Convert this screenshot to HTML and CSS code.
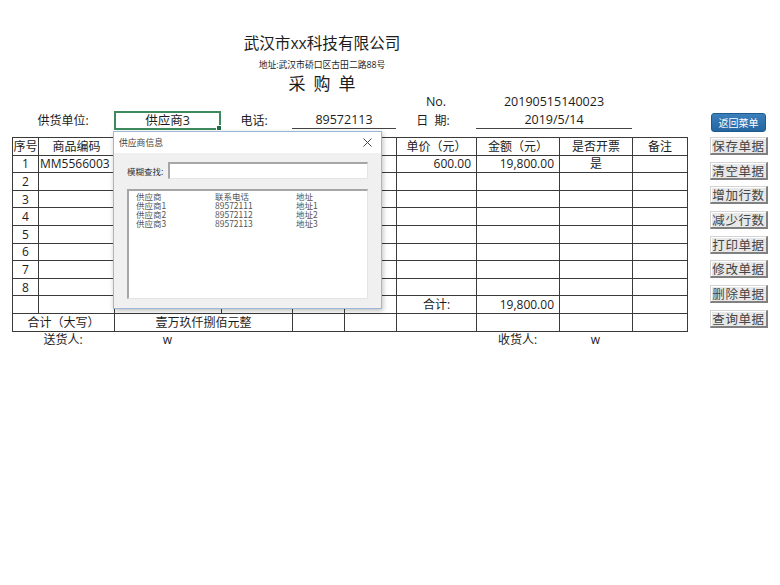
FILE: index.html
```html
<!DOCTYPE html>
<html lang="zh-CN">
<head>
<meta charset="utf-8">
<title>采购单</title>
<link rel="stylesheet" href="styles.css">
</head>
<body>
<div class="page">
  <main class="sheet">
    <header class="doc-head">
      <h1 class="company">武汉市xx科技有限公司</h1>
      <p class="address">地址:武汉市硚口区古田二路88号</p>
      <h2 class="doc-title">采购单</h2>
    </header>

    <div class="meta meta-top">
      <span class="cell at-5">No.</span>
      <span class="cell at-6">20190515140023</span>
    </div>
    <div class="meta meta-main">
      <span class="cell label">供货单位:</span>
      <span class="cell selected">供应商3</span>
      <span class="cell label phone-label">电话:</span>
      <span class="cell field-line">89572113</span>
      <span class="cell label date-label">日&nbsp;&nbsp;期:</span>
      <span class="cell field-line">2019/5/14</span>
    </div>

    <table class="grid">
      <colgroup>
        <col class="w-seq"><col class="w-code"><col class="w-name"><col class="w-spec">
        <col class="w-unit"><col class="w-qty"><col class="w-price"><col class="w-amount">
        <col class="w-invoice"><col class="w-note">
      </colgroup>
      <thead>
        <tr>
          <th class="tight">序号</th><th>商品编码</th><th></th><th></th>
          <th></th><th></th><th>单价（元）</th><th>金额（元）</th><th>是否开票</th><th>备注</th>
        </tr>
      </thead>
      <tbody>
        <tr><td class="c">1</td><td class="code">MM5566003</td><td></td><td></td><td></td><td></td><td class="r">600.00</td><td class="r">19,800.00</td><td class="c">是</td><td></td></tr>
        <tr><td class="c">2</td><td></td><td></td><td></td><td></td><td></td><td></td><td></td><td></td><td></td></tr>
        <tr><td class="c">3</td><td></td><td></td><td></td><td></td><td></td><td></td><td></td><td></td><td></td></tr>
        <tr><td class="c">4</td><td></td><td></td><td></td><td></td><td></td><td></td><td></td><td></td><td></td></tr>
        <tr><td class="c">5</td><td></td><td></td><td></td><td></td><td></td><td></td><td></td><td></td><td></td></tr>
        <tr><td class="c">6</td><td></td><td></td><td></td><td></td><td></td><td></td><td></td><td></td><td></td></tr>
        <tr><td class="c">7</td><td></td><td></td><td></td><td></td><td></td><td></td><td></td><td></td><td></td></tr>
        <tr><td class="c">8</td><td></td><td></td><td></td><td></td><td></td><td></td><td></td><td></td><td></td></tr>
        <tr><td></td><td></td><td></td><td></td><td></td><td></td><td class="c">合计:</td><td class="r">19,800.00</td><td></td><td></td></tr>
        <tr><td class="c" colspan="2">合计（大写）</td><td class="c" colspan="2">壹万玖仟捌佰元整</td><td></td><td></td><td></td><td></td><td></td><td></td></tr>
      </tbody>
    </table>

    <div class="sign">
      <span class="cell">送货人:</span>
      <span class="cell">w</span>
      <span class="cell at-6">收货人:</span>
      <span class="cell at-7">w</span>
    </div>
  </main>

  <aside class="actions">
    <button class="btn-primary">返回菜单</button>
    <button class="btn">保存单据</button>
    <button class="btn">清空单据</button>
    <button class="btn">增加行数</button>
    <button class="btn">减少行数</button>
    <button class="btn">打印单据</button>
    <button class="btn">修改单据</button>
    <button class="btn">删除单据</button>
    <button class="btn">查询单据</button>
  </aside>

  <section class="dialog">
    <div class="dialog-title">
      <span>供应商信息</span>
      <svg class="close" width="9" height="9" viewBox="0 0 9 9"><path d="M0.5 0.5 L8.5 8.5 M8.5 0.5 L0.5 8.5" stroke="#444" stroke-width="1" fill="none"/></svg>
    </div>
    <div class="dialog-body">
      <div class="search-row">
        <span class="search-label">模糊查找:</span>
        <span class="search-input"></span>
      </div>
      <div class="listbox">
        <div class="list-row"><span>供应商</span><span>联系电话</span><span>地址</span></div>
        <div class="list-row"><span>供应商1</span><span>89572111</span><span>地址1</span></div>
        <div class="list-row"><span>供应商2</span><span>89572112</span><span>地址2</span></div>
        <div class="list-row"><span>供应商3</span><span>89572113</span><span>地址3</span></div>
      </div>
    </div>
  </section>
</div>
</body>
</html>
```

FILE: styles.css
```css
* { box-sizing: border-box; }

body {
  margin: 0;
  background: #ffffff;
  color: #1c1c1c;
  font-family: "Open Sans", "Noto Sans CJK SC", sans-serif;
}

.page {
  position: relative;
  display: flex;
  width: 780px;
  height: 585px;
}

.sheet {
  width: 700px;
  padding-left: 12px;
}

/* ---------- heading ---------- */
.doc-head {
  width: 620px;
  text-align: center;
  padding-top: 33px;
}

.company {
  margin: 0;
  font-size: 15.6px;
  font-weight: 400;
  line-height: 20px;
}

.address {
  margin: 6px 0 0;
  font-size: 8.8px;
  line-height: 12px;
}

.doc-title {
  margin: 3px 0 0;
  font-size: 17px;
  font-weight: 400;
  line-height: 20px;
  letter-spacing: 8px;
  padding-left: 8px;
}

/* ---------- meta rows ---------- */
.meta {
  display: grid;
  grid-template-columns: 102px 107px 71px 104px 80px 156px;
  font-size: 12.5px;
}

.cell {
  text-align: center;
  white-space: nowrap;
}

.meta-top {
  height: 16px;
  line-height: 16px;
}

.at-5 { grid-column: 5; }
.at-6 { grid-column: 6; }
.at-7 { grid-column: 7; }

.meta-main {
  height: 19px;
  margin-top: 1px;
  line-height: 17px;
}

.label {
  font-size: 12px;
  line-height: 19px;
}

.phone-label {
  padding-right: 5px;
}

.date-label {
  padding-right: 6px;
}

.selected {
  position: relative;
  border: 2px solid #3d8b5c;
  line-height: 15px;
}

.selected::after {
  content: "";
  position: absolute;
  right: -3px;
  bottom: -3px;
  width: 4px;
  height: 4px;
  background: #1f6b40;
  border: 1px solid #fff;
}

.field-line {
  height: 18px;
  border-bottom: 1px solid #444;
}

/* ---------- table ---------- */
.grid {
  margin-top: 7px;
  width: 675px;
  table-layout: fixed;
  border-collapse: collapse;
  font-size: 12px;
}

.w-seq { width: 26px; }
.w-code { width: 76px; }
.w-name { width: 107px; }
.w-spec { width: 71px; }
.w-unit { width: 52px; }
.w-qty { width: 52px; }
.w-price { width: 80px; }
.w-amount { width: 83px; }
.w-invoice { width: 73px; }
.w-note { width: 55px; }

.grid tr {
  height: 17.6px;
}

.grid th,
.grid td {
  border: 1px solid #3a3a3a;
  padding: 0 5px;
  line-height: 15px;
  font-weight: 400;
  white-space: nowrap;
  overflow: hidden;
}

.grid th { text-align: center; }
.grid th.tight { padding: 0; }

.grid td.c { text-align: center; }
.grid td.r { text-align: right; }
.grid td.code { padding: 0 1px; overflow: visible; }

/* ---------- signature row ---------- */
.sign {
  display: grid;
  grid-template-columns: 102px 107px 71px 104px 80px 83px 73px 55px;
  height: 16px;
  line-height: 16px;
  font-size: 12px;
}

/* ---------- action buttons ---------- */
.actions {
  width: 58px;
  margin-left: 10px;
  padding-top: 113px;
  display: flex;
  flex-direction: column;
  gap: 6.7px;
}

.btn-primary {
  height: 19px;
  margin: 0 2px -1.7px 1px;
  padding: 0;
  border: 1px solid #1f5a8e;
  border-radius: 3px;
  background: linear-gradient(#3b7fbb, #2466a0);
  color: #ffffff;
  font-family: "Noto Sans CJK SC", sans-serif;
  font-size: 10px;
  line-height: 17px;
}

.btn {
  height: 18px;
  padding: 0;
  border: 1px solid #d4d4d4;
  border-right: 2px solid #808080;
  border-bottom: 2px solid #808080;
  box-shadow: inset 1px 1px 0 #ffffff;
  background: #e8e8e8;
  color: #444444;
  font-family: "Noto Sans CJK SC", sans-serif;
  font-size: 12.5px;
  line-height: 15px;
  letter-spacing: 0.6px;
}

/* ---------- supplier dialog ---------- */
.dialog {
  position: absolute;
  left: 113px;
  top: 131px;
  width: 269px;
  height: 178px;
  background: #f0f0f0;
  border: 1px solid #9db8d6;
  box-shadow: 1px 2px 5px rgba(0, 0, 0, 0.25);
  z-index: 2;
  font-family: "Noto Sans CJK SC", sans-serif;
  color: #444;
}

.dialog-title {
  height: 21px;
  background: #ffffff;
  display: flex;
  align-items: center;
  justify-content: space-between;
  padding: 0 9px 0 5px;
  font-size: 8.8px;
  line-height: 12px;
}

.close { display: block; }

.dialog-body {
  padding: 9px 13px 0 13px;
}

.search-row {
  display: flex;
  align-items: center;
  height: 17px;
}

.search-label {
  width: 41px;
  font-size: 8.5px;
  line-height: 12px;
  color: #333;
}

.search-input {
  flex: 1;
  height: 17px;
  background: #ffffff;
  border-top: 2px solid #a6a6a6;
  border-left: 2px solid #a6a6a6;
  border-right: 1px solid #e4e4e4;
  border-bottom: 1px solid #e4e4e4;
}

.listbox {
  margin-top: 10px;
  height: 110px;
  background: #ffffff;
  border-top: 2px solid #a6a6a6;
  border-left: 2px solid #a6a6a6;
  border-right: 1px solid #e4e4e4;
  border-bottom: 1px solid #e4e4e4;
  padding: 1px 0 0 7px;
}

.list-row {
  display: grid;
  grid-template-columns: 79px 81px auto;
  font-size: 8.5px;
  line-height: 9px;
  height: 9px;
  color: #555;
}
```
